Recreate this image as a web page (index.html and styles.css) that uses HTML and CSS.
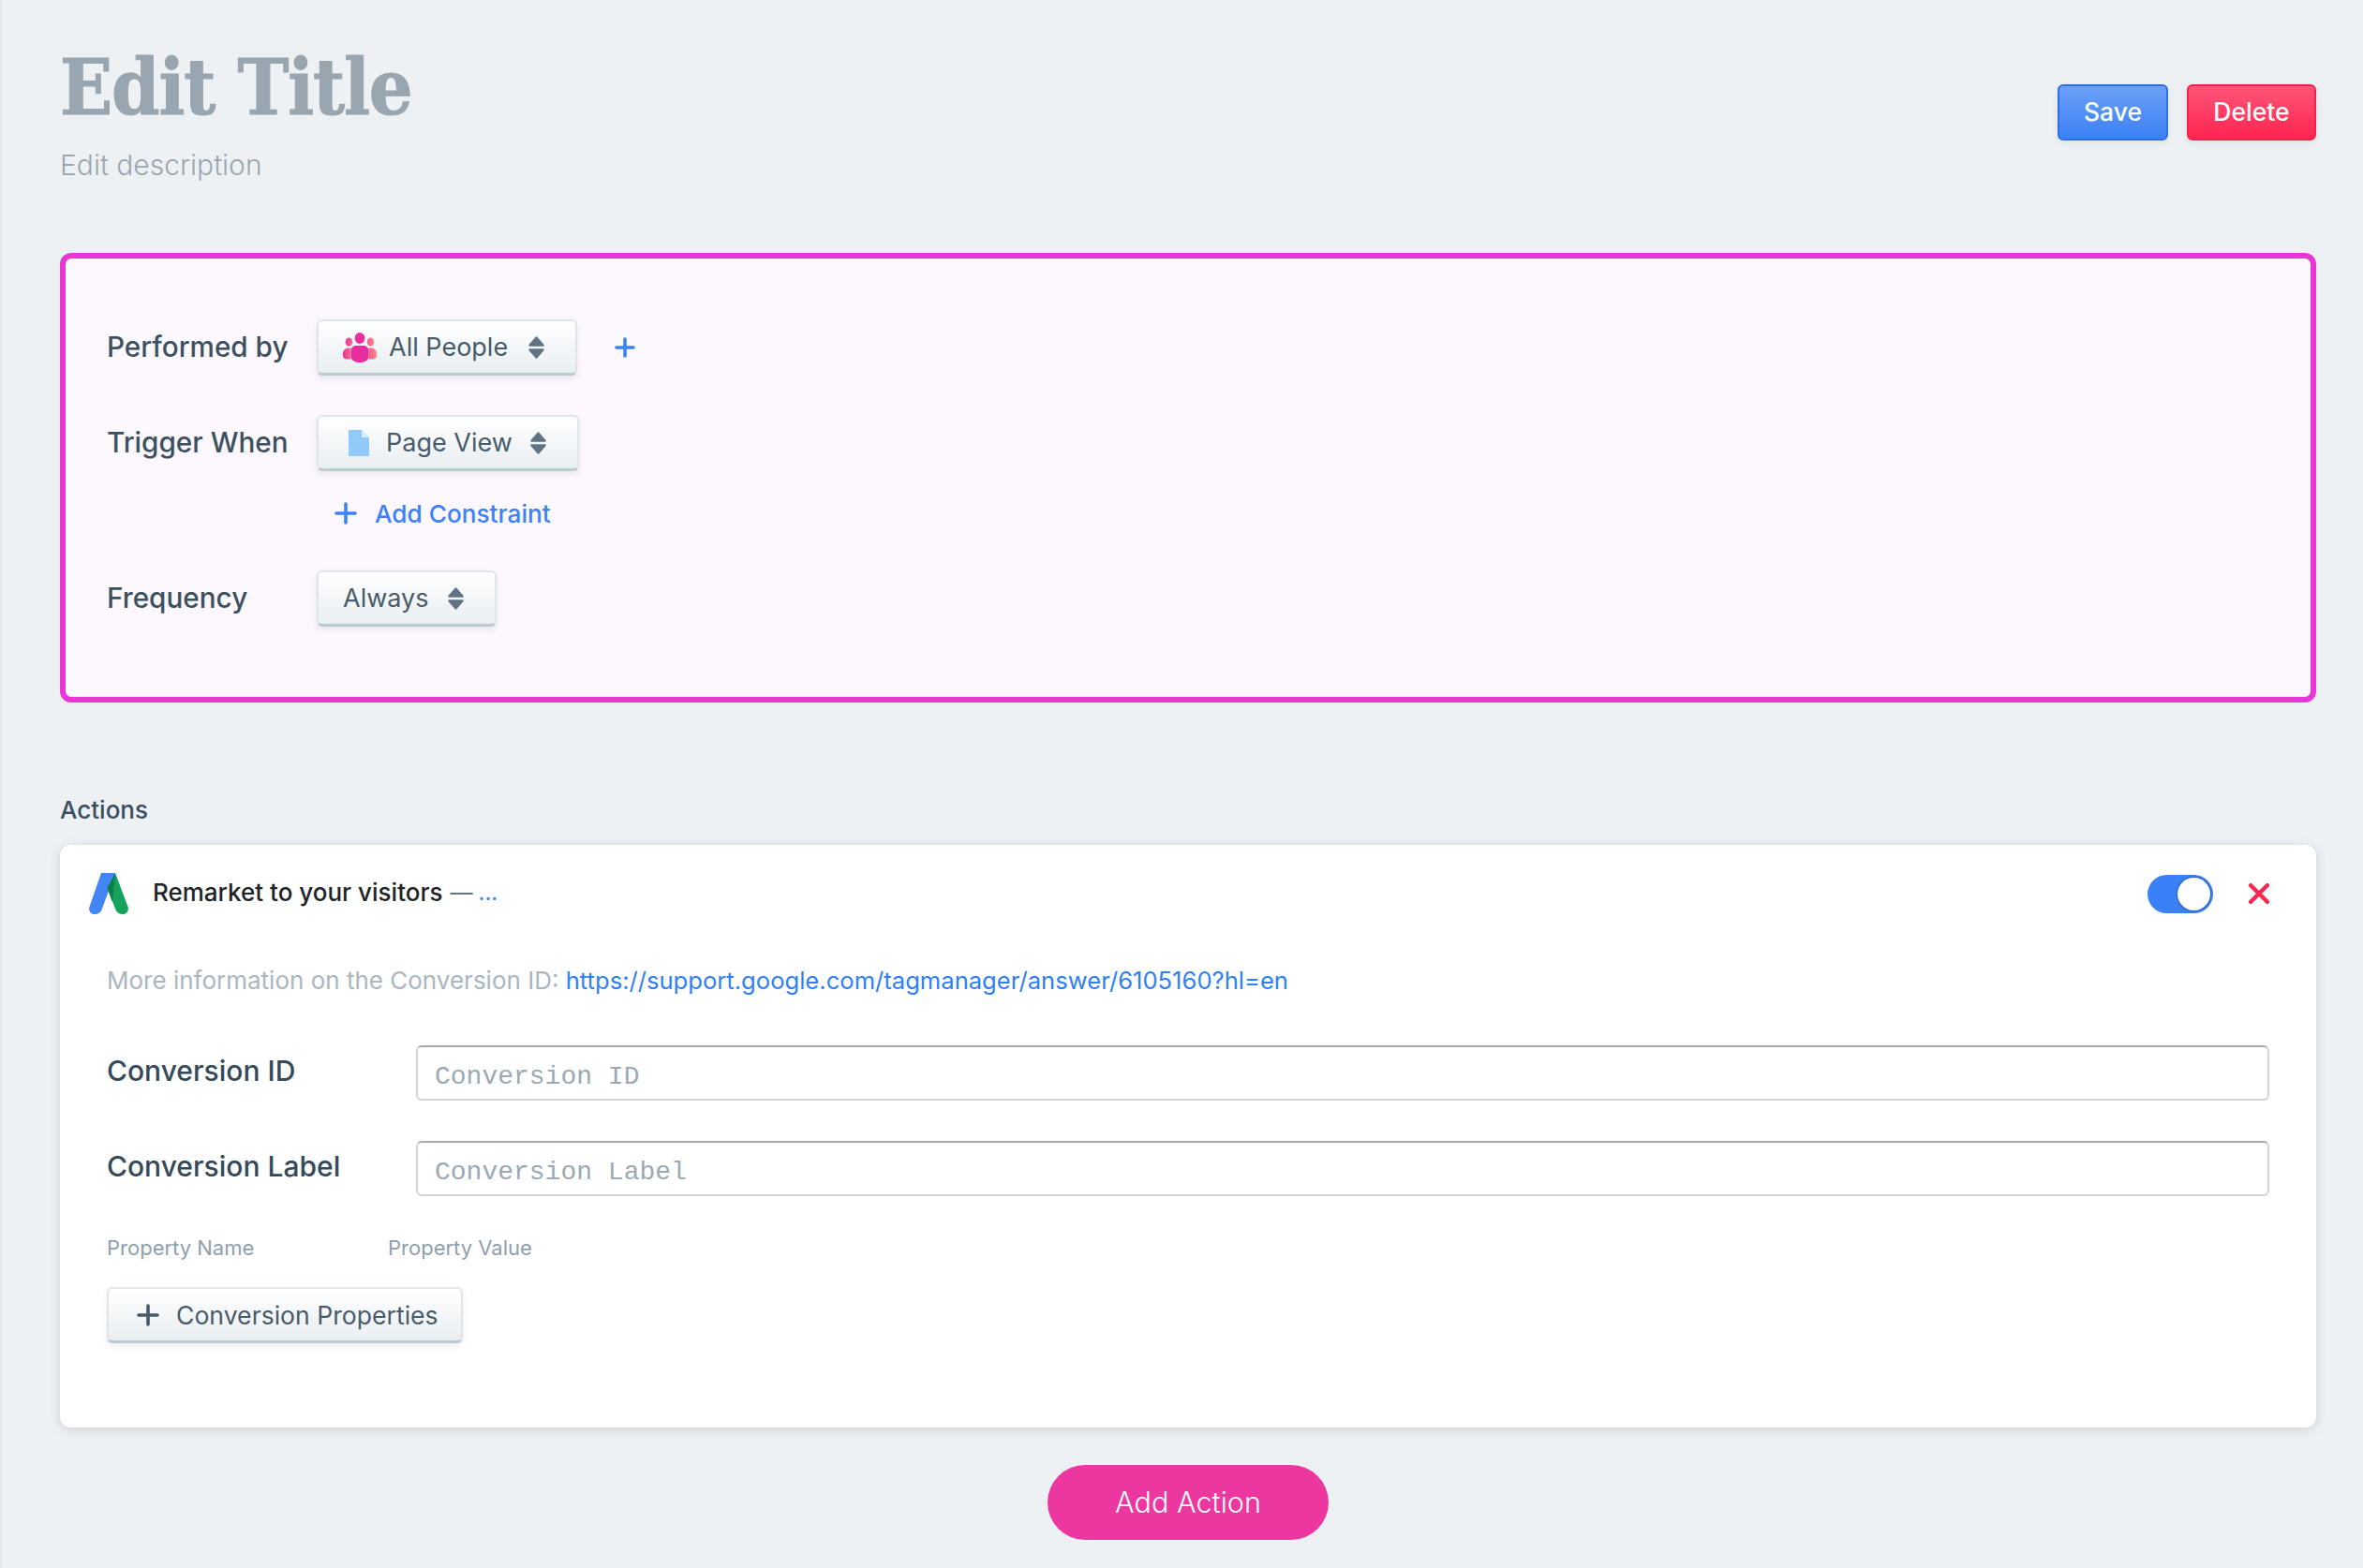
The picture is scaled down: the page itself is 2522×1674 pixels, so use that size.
FILE: index.html
```html
<!DOCTYPE html>
<html lang="en">
<head>
    <meta charset="UTF-8">
    <title>Edit Title</title>
    <link rel="stylesheet" href="styles.css">
</head>
<body>

    <div class="page">
        <header class="page-header">
            <div>
                <h1 class="page-title">Edit Title</h1>
                <p class="page-desc">Edit description</p>
            </div>
            <div class="header-actions">
                <button class="btn btn-save">Save</button>
                <button class="btn btn-delete">Delete</button>
            </div>
        </header>

        <section class="trigger-panel">
            <div class="form-row">
                <span class="form-label">Performed by</span>
                <button class="select select-people">
                    <svg class="icon-people" viewBox="0 0 36 32">
                        <defs>
                            <linearGradient id="side-left" x1="0" x2="1" y1="0" y2="0">
                                <stop offset="0" stop-color="#e92f9c"/>
                                <stop offset="1" stop-color="#f4708f"/>
                            </linearGradient>
                            <linearGradient id="side-right" x1="0" x2="1" y1="0" y2="0">
                                <stop offset="0" stop-color="#f4608f"/>
                                <stop offset="1" stop-color="#f88a8a"/>
                            </linearGradient>
                        </defs>
                        <ellipse cx="18" cy="6" rx="5.4" ry="6" fill="#e92f9f"/>
                        <ellipse cx="6.5" cy="10" rx="3.8" ry="4.6" fill="url(#side-left)"/>
                        <ellipse cx="29.5" cy="10" rx="3.8" ry="4.6" fill="url(#side-right)"/>
                        <path d="M6 16.5H8.5V28.5H4C1.5 28.5 0 27 0 24.5V22C0 19 2.5 16.5 6 16.5Z" fill="url(#side-left)"/>
                        <path d="M30 16.5H27.5V28.5H32C34.5 28.5 36 27 36 24.5V22C36 19 33.5 16.5 30 16.5Z" fill="url(#side-right)"/>
                        <path d="M14 14H22C25.5 14 27.5 16.5 27.5 20V25C27.5 29.5 23.5 32 18 32C12.5 32 8.5 29.5 8.5 25V20C8.5 16.5 10.5 14 14 14Z" fill="#e92f9f"/>
                    </svg>
                    <span>All People</span>
                    <svg class="icon-sort" viewBox="0 0 17 24"><path d="M8.5 1.5L15.5 9.5H1.5ZM1.5 14.5H15.5L8.5 22.5Z" fill="#5f7383" stroke="#5f7383" stroke-width="2.4" stroke-linejoin="round"/></svg>
                </button>
                <svg class="icon-plus add-person" viewBox="0 0 22 22"><path d="M11 2V20M2 11H20" stroke="#3b82f6" stroke-width="3.6" stroke-linecap="round"/></svg>
            </div>
            <div class="form-row">
                <span class="form-label">Trigger When</span>
                <button class="select select-page">
                    <svg class="icon-page" viewBox="0 0 22 28"><path d="M0 0H14L22 8V28H0Z" fill="#92cbfb"/><path d="M14 0L22 8H14Z" fill="#d7ecfd"/></svg>
                    <span>Page View</span>
                    <svg class="icon-sort" viewBox="0 0 17 24"><path d="M8.5 1.5L15.5 9.5H1.5ZM1.5 14.5H15.5L8.5 22.5Z" fill="#5f7383" stroke="#5f7383" stroke-width="2.4" stroke-linejoin="round"/></svg>
                </button>
            </div>
            <a class="add-constraint">
                <svg class="icon-plus" viewBox="0 0 24 24"><path d="M12 2V22M2 12H22" stroke="#3b82f6" stroke-width="3.6" stroke-linecap="round"/></svg>
                Add Constraint
            </a>
            <div class="form-row">
                <span class="form-label">Frequency</span>
                <button class="select select-freq">
                    <span>Always</span>
                    <svg class="icon-sort" viewBox="0 0 17 24"><path d="M8.5 1.5L15.5 9.5H1.5ZM1.5 14.5H15.5L8.5 22.5Z" fill="#5f7383" stroke="#5f7383" stroke-width="2.4" stroke-linejoin="round"/></svg>
                </button>
            </div>
        </section>

        <h2 class="section-title">Actions</h2>

        <section class="action-card">
            <div class="action-head">
                <svg class="logo-ads" viewBox="0 0 42 44">
                    <path d="M13 0H28L14 38C12.8 42 10 44 6 44C2 44 -1 40 0.5 36Z" fill="#4285f4"/>
                    <path d="M28 0L41.5 36C43 40 40 44 36 44C32 44 29.5 42 28 38L19.5 16Z" fill="#14a35c"/>
                    <path d="M28 0L19.5 16L25 31Z" fill="#0b7f46"/>
                </svg>
                <span class="action-name">Remarket to your visitors</span>
                <span class="action-dash">—</span>
                <a class="action-more">...</a>
                <span class="toggle"><span class="toggle-knob"></span></span>
                <svg class="icon-close" viewBox="0 0 20 20"><path d="M2 2L18 18M18 2L2 18" stroke="#f9274f" stroke-width="4" stroke-linecap="round"/></svg>
            </div>

            <p class="action-info">More information on the Conversion ID: <a>https://support.google.com/tagmanager/answer/6105160?hl=en</a></p>

            <div class="field-row">
                <label class="field-label" for="conv-id">Conversion ID</label>
                <input class="field-input" id="conv-id" placeholder="Conversion ID">
            </div>
            <div class="field-row">
                <label class="field-label" for="conv-label">Conversion Label</label>
                <input class="field-input" id="conv-label" placeholder="Conversion Label">
            </div>

            <div class="prop-heads">
                <span class="prop-name">Property Name</span>
                <span>Property Value</span>
            </div>
            <button class="select select-props">
                <svg class="icon-plus" viewBox="0 0 24 24"><path d="M12 2V22M2 12H22" stroke="#475b6b" stroke-width="3.6" stroke-linecap="round"/></svg>
                <span>Conversion Properties</span>
            </button>
        </section>

        <div class="add-action-wrap">
            <button class="btn-add-action">Add Action</button>
        </div>
    </div>

</body>
</html>
```

FILE: styles.css
```css
* {
    box-sizing: border-box;
}
body {
    margin: 0;
    background-color: #eef1f4;
    font-family: Inter, Lato, "Noto Sans", sans-serif;
    color: #3a4f5f;
}
button {
    font-family: inherit;
    cursor: pointer;
}
.page {
    height: 1674px;
    overflow: hidden;
    padding: 0 50px 30px 62px;
    border-left: 2px solid #e2e8ed;
}

/* header */
.page-header {
    display: flex;
    justify-content: space-between;
    height: 270px;
}
.page-title {
    margin: 45px 0 0;
    font-family: "DejaVu Serif Condensed", "DejaVu Serif", serif;
    font-weight: bold;
    font-size: 82px;
    line-height: 96px;
    letter-spacing: -1.2px;
    -webkit-text-stroke: 1px #99a6af;
    color: #99a6af;
}
.page-desc {
    margin: 17px 0 0;
    font-size: 30px;
    line-height: 36px;
    font-weight: 300;
    color: #9aa7b0;
}
.header-actions {
    display: flex;
    gap: 20px;
    padding-top: 90px;
}
.btn {
    height: 60px;
    padding-bottom: 4px;
    border-radius: 6px;
    border: 2px solid;
    color: #fff;
    font-size: 26.5px;
    font-weight: 500;
    box-shadow: 0 3px 8px rgba(0, 0, 0, 0.06);
}
.btn-save {
    width: 118px;
    background: linear-gradient(#6ba0f8, #3b80f5);
    border-color: #2f6fe6;
}
.btn-delete {
    width: 138px;
    background: linear-gradient(#ff5578, #ff2450);
    border-color: #f0234c;
}

/* trigger panel */
.trigger-panel {
    height: 480px;
    padding: 65px 44px 0;
    background-color: #fdf7fe;
    border: 6px solid #e936d6;
    border-radius: 12px;
}
.form-row {
    display: flex;
    align-items: center;
    margin-bottom: 42px;
}
.form-row:nth-child(2) {
    margin-bottom: 30px;
}
.form-label {
    width: 224px;
    padding-bottom: 3px;
    font-size: 29.7px;
    font-weight: 500;
    color: #3c5160;
}
.select {
    display: inline-flex;
    align-items: center;
    height: 60px;
    padding: 0 33px 0 26px;
    font-size: 27px;
    white-space: nowrap;
    color: #475b6b;
    background: linear-gradient(#ffffff, #e9eef1);
    border: 2px solid #dfe6e9;
    border-bottom: 3px solid #b9cad2;
    border-radius: 6px;
    box-shadow: 0 3px 6px rgba(60, 80, 95, 0.1);
}
.select-people {
    width: 278px;
}
.select-page {
    width: 280px;
}
.select-freq {
    width: 192px;
}
.icon-people {
    width: 36px;
    height: 32px;
    margin-right: 13px;
}
.icon-page {
    width: 22px;
    height: 28px;
    margin: 0 18px 0 6px;
}
.icon-sort {
    width: 17px;
    height: 24px;
    margin-left: auto;
    flex: none;
}
.icon-plus {
    width: 24px;
    height: 24px;
    flex: none;
}
.add-person {
    width: 22px;
    height: 22px;
    margin-left: 40px;
}
.add-constraint {
    display: flex;
    align-items: center;
    gap: 19px;
    margin: 0 0 46px 243px;
    height: 30px;
    font-size: 26.2px;
    font-weight: 500;
    color: #3b82f6;
}

/* actions */
.section-title {
    margin: 97px 0 19px;
    font-size: 26px;
    line-height: 36px;
    font-weight: 500;
    color: #3a4f5f;
}
.action-card {
    height: 622px;
    padding: 30px 50px 0;
    background-color: #fff;
    border-radius: 12px;
    box-shadow: 0 2px 12px rgba(50, 60, 80, 0.18);
}
.action-head {
    display: flex;
    align-items: center;
    height: 44px;
    margin-left: -19px;
    font-size: 26px;
}
.logo-ads {
    width: 42px;
    height: 44px;
    margin-right: 26px;
}
.action-name {
    padding-bottom: 3px;
    font-weight: 500;
    color: #1e2327;
}
.action-dash {
    margin: 0 6px 0 8px;
    padding-bottom: 3px;
    font-size: 24px;
    color: #5f7383;
}
.action-more {
    padding-bottom: 3px;
    font-size: 24px;
    color: #3b82f6;
}
.toggle {
    display: flex;
    align-items: center;
    justify-content: flex-end;
    width: 70px;
    height: 41px;
    margin-left: auto;
    padding-right: 3px;
    background-color: #3a80f8;
    border-radius: 21px;
}
.toggle-knob {
    width: 35px;
    height: 35px;
    background-color: #fff;
    border-radius: 50%;
    box-shadow: 0 0 2px 1px #2a5fb0;
}
.icon-close {
    width: 22px;
    height: 22px;
    margin-left: 38px;
}
.action-info {
    margin: 53px 0 0;
    font-size: 26px;
    line-height: 36px;
    color: #a9b6c0;
}
.action-info a {
    font-size: 25.6px;
    color: #2f80f5;
}
.field-row {
    display: flex;
    align-items: center;
    margin-top: 43px;
    height: 59px;
}
.action-info + .field-row {
    margin-top: 51px;
}
.field-label {
    width: 330px;
    font-size: 30px;
    font-weight: 500;
    color: #34495a;
    padding-bottom: 5px;
}
.field-input {
    flex: 1;
    height: 59px;
    padding: 7px 18px 0;
    font-family: "Liberation Mono", monospace;
    font-size: 28px;
    border: 2px solid #d4d4d4;
    border-top-color: #a9a9a9;
    border-radius: 6px;
    background: #fff;
}
.field-input::placeholder {
    color: #9aa9b3;
}
.prop-heads {
    display: flex;
    margin-top: 40px;
    font-size: 22px;
    line-height: 30px;
    color: #8ea0ae;
}
.prop-name {
    width: 300px;
}
.select-props {
    width: 380px;
    margin-top: 27px;
    gap: 18px;
    padding: 0 0 0 30px;
    font-size: 26.6px;
}

/* add action */
.add-action-wrap {
    display: flex;
    justify-content: center;
    margin-top: 40px;
}
.btn-add-action {
    width: 300px;
    height: 80px;
    padding-bottom: 3px;
    border: none;
    border-radius: 40px;
    background-color: #ec36a0;
    color: #fff;
    font-size: 30.6px;
    font-weight: 300;
}
```
